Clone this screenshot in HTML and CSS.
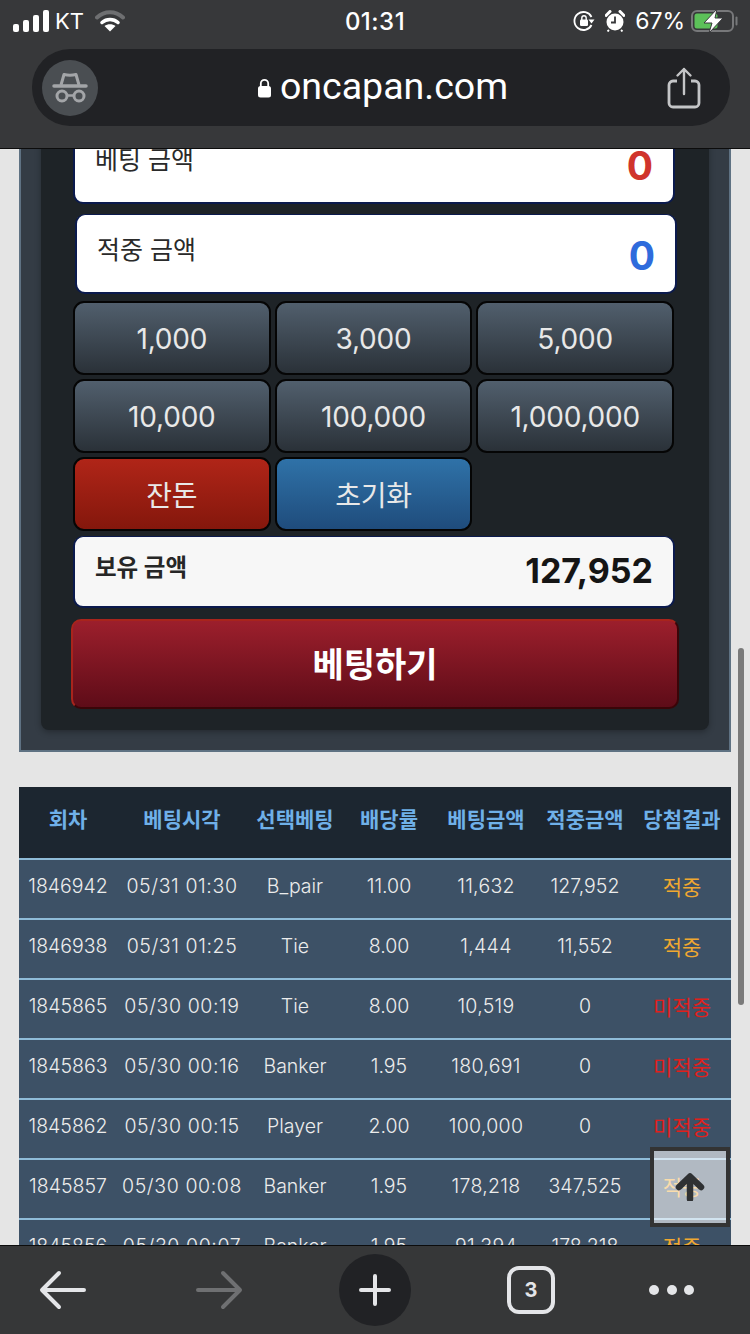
FILE: index.html
```html
<!DOCTYPE html>
<html lang="ko">
<head>
    <meta charset="UTF-8">
    <meta name="viewport" content="width=device-width, initial-scale=1.0">
    <title>oncapan.com</title>
    <link rel="stylesheet" href="styles.css">
</head>
<body>
    <div class="phone">
        <header class="browser-top">
            <div class="status-bar">
                <div class="status-left">
                    <svg class="signal" width="36" height="22" viewBox="0 0 36 22">
                        <rect x="0" y="14" width="6" height="8" rx="2" fill="#fff"/>
                        <rect x="10" y="10" width="6" height="12" rx="2" fill="#fff"/>
                        <rect x="20" y="5" width="6" height="17" rx="2" fill="#fff"/>
                        <rect x="30" y="0" width="6" height="22" rx="2" fill="#fff"/>
                    </svg>
                    <span class="carrier">KT</span>
                    <svg class="wifi" width="30" height="22" viewBox="0 0 30 22">
                        <path d="M2 7.500C9.500 .5 20.500 .5 28 7.500" fill="none" stroke="#6e6f71" stroke-width="4" stroke-linecap="round"/>
                        <path d="M7 12.500C11.500 8.500 18.500 8.500 23 12.500" fill="none" stroke="#fff" stroke-width="3.500" stroke-linecap="round"/>
                        <path d="M15 21.500L9.500 16C12.500 13.500 17.500 13.500 20.500 16Z" fill="#fff"/>
                    </svg>
                </div>
                <div class="status-time">01:31</div>
                <div class="status-right">
                    <svg width="22" height="22" viewBox="0 0 22 22">
                        <path d="M18.500 7A9 9 0 1 0 18.500 15" fill="none" stroke="#fff" stroke-width="1.800"/>
                        <path d="M15.500 9.500H21.500L18.500 13.500Z" fill="#fff"/>
                        <rect x="7" y="9.500" width="8" height="6.500" rx="1.200" fill="#fff"/>
                        <path d="M8.800 10V8a2.200 2.200 0 0 1 4.400 0v2" fill="none" stroke="#fff" stroke-width="1.400"/>
                    </svg>
                    <svg width="20" height="22" viewBox="0 0 20 22">
                        <circle cx="10" cy="12" r="8.500" fill="#fff"/>
                        <path d="M1 5.500L5 1.500M19 5.500L15 1.500" stroke="#fff" stroke-width="3" stroke-linecap="round"/>
                        <path d="M10 6.500V12.500H6" fill="none" stroke="#37383a" stroke-width="1.800"/>
                        <path d="M4 20L2.500 21.500M16 20L17.500 21.500" stroke="#fff" stroke-width="1.800"/>
                    </svg>
                    <span class="battery-text">67%</span>
                    <svg width="48" height="24" viewBox="0 0 48 24">
                        <rect x="1" y="2" width="41" height="20" rx="5" fill="none" stroke="#77787a" stroke-width="2"/>
                        <rect x="3.500" y="4.500" width="23" height="15" rx="2.500" fill="#5cc159"/>
                        <path d="M45.500 8.500V15.500" stroke="#77787a" stroke-width="2" stroke-linecap="round"/>
                        <path d="M26 0L13 14H21L18 24L32 9H24Z" fill="#fff" stroke="#37383a" stroke-width="1"/>
                    </svg>
                </div>
            </div>
            <div class="url-bar">
                <div class="incognito">
                    <svg width="36" height="36" viewBox="0 0 36 36">
                        <path d="M9 15L12 4.500Q18 6 24 4.500L27 15" fill="none" stroke="#a3a5a8" stroke-width="3" stroke-linejoin="round"/>
                        <path d="M2 16H34" stroke="#a3a5a8" stroke-width="3.500" stroke-linecap="round"/>
                        <circle cx="10" cy="26" r="5" fill="none" stroke="#a3a5a8" stroke-width="3"/>
                        <circle cx="27" cy="26" r="5" fill="none" stroke="#a3a5a8" stroke-width="3"/>
                        <path d="M15 25.500H22" stroke="#a3a5a8" stroke-width="2.500"/>
                    </svg>
                </div>
                <div class="url-text">
                    <svg width="15" height="20" viewBox="0 0 15 20">
                        <rect x="1" y="8" width="13" height="11.500" rx="2.500" fill="#fff"/>
                        <path d="M3.800 8.500V5.500a3.700 3.700 0 0 1 7.400 0v3" fill="none" stroke="#fff" stroke-width="1.800"/>
                    </svg>
                    <span class="url-host">oncapan.com</span>
                </div>
                <svg class="share" width="34" height="42" viewBox="0 0 34 42">
                    <path d="M10 14H6a4 4 0 0 0-4 4V36a4 4 0 0 0 4 4H28a4 4 0 0 0 4-4V18a4 4 0 0 0-4-4H24" fill="none" stroke="#c4c5c7" stroke-width="2.800"/>
                    <path d="M17 27V2M10.500 8.500L17 2L23.500 8.500" fill="none" stroke="#c4c5c7" stroke-width="2.400" stroke-linecap="round" stroke-linejoin="round"/>
                </svg>
            </div>
        </header>

        <main class="page">
            <div class="page-inner">
                <section class="bet-panel">
                    <div class="bet-box">
                        <div class="amount-row row-bet">
                            <span class="amount-label">베팅 금액</span>
                            <span class="amount-value red">0</span>
                        </div>
                        <div class="amount-row row-win">
                            <span class="amount-label">적중 금액</span>
                            <span class="amount-value blue">0</span>
                        </div>
                        <div class="chip-grid">
                            <button class="chip">1,000</button>
                            <button class="chip">3,000</button>
                            <button class="chip">5,000</button>
                            <button class="chip">10,000</button>
                            <button class="chip">100,000</button>
                            <button class="chip">1,000,000</button>
                            <button class="chip chip-red">잔돈</button>
                            <button class="chip chip-blue">초기화</button>
                        </div>
                        <div class="balance-row">
                            <span class="balance-label">보유 금액</span>
                            <span class="balance-value">127,952</span>
                        </div>
                        <button class="bet-button">베팅하기</button>
                    </div>
                </section>

                <table class="history">
                    <colgroup>
                        <col class="col-round">
                        <col class="col-time">
                        <col class="col-pick">
                        <col class="col-rate">
                        <col class="col-amount">
                        <col class="col-win">
                        <col class="col-result">
                    </colgroup>
                    <thead>
                        <tr>
                            <th>회차</th>
                            <th>베팅시각</th>
                            <th>선택베팅</th>
                            <th>배당률</th>
                            <th>베팅금액</th>
                            <th>적중금액</th>
                            <th>당첨결과</th>
                        </tr>
                    </thead>
                    <tbody>
                        <tr><td>1846942</td><td class="when">05/31 01:30</td><td>B_pair</td><td>11.00</td><td class="stake">11,632</td><td>127,952</td><td class="hit">적중</td></tr>
                        <tr><td>1846938</td><td class="when">05/31 01:25</td><td>Tie</td><td>8.00</td><td class="stake">1,444</td><td>11,552</td><td class="hit">적중</td></tr>
                        <tr><td>1845865</td><td class="when">05/30 00:19</td><td>Tie</td><td>8.00</td><td class="stake">10,519</td><td>0</td><td class="miss">미적중</td></tr>
                        <tr><td>1845863</td><td class="when">05/30 00:16</td><td>Banker</td><td>1.95</td><td class="stake">180,691</td><td>0</td><td class="miss">미적중</td></tr>
                        <tr><td>1845862</td><td class="when">05/30 00:15</td><td>Player</td><td>2.00</td><td class="stake">100,000</td><td>0</td><td class="miss">미적중</td></tr>
                        <tr><td>1845857</td><td class="when">05/30 00:08</td><td>Banker</td><td>1.95</td><td class="stake">178,218</td><td>347,525</td><td class="hit">적중</td></tr>
                        <tr><td>1845856</td><td class="when">05/30 00:07</td><td>Banker</td><td>1.95</td><td class="stake">91,394</td><td>178,218</td><td class="hit">적중</td></tr>
                    </tbody>
                </table>
            </div>

            <div class="scrollbar"></div>
            <button class="to-top" aria-label="top">
                <svg width="30" height="28" viewBox="0 0 30 28">
                    <path d="M15 26V4M4 14L15 3.500L26 14" fill="none" stroke="#2f3133" stroke-width="6.500" stroke-linecap="round" stroke-linejoin="round"/>
                </svg>
            </button>
        </main>

        <footer class="browser-bottom">
            <svg width="48" height="40" viewBox="0 0 48 40">
                <path d="M45 20H4M20 3L3 20L20 37" fill="none" stroke="#e4e5e8" stroke-width="4" stroke-linecap="round" stroke-linejoin="round"/>
            </svg>
            <svg width="48" height="40" viewBox="0 0 48 40">
                <path d="M3 20H44M28 3L45 20L28 37" fill="none" stroke="#6f7072" stroke-width="4" stroke-linecap="round" stroke-linejoin="round"/>
            </svg>
            <div class="new-tab">
                <svg width="34" height="34" viewBox="0 0 34 34">
                    <path d="M17 3V31M3 17H31" stroke="#e4e5e8" stroke-width="4" stroke-linecap="round"/>
                </svg>
            </div>
            <div class="tab-count">3</div>
            <div class="more-dots"><i></i><i></i><i></i></div>
        </footer>
    </div>
</body>
</html>
```

FILE: styles.css
```css
* {
    margin: 0;
    padding: 0;
    box-sizing: border-box;
}

body {
    font-family: Inter, 'Noto Sans CJK KR', sans-serif;
    background: #e5e5e5;
    overflow: hidden;
}

button {
    font-family: inherit;
}

.phone {
    width: 750px;
    height: 1334px;
    display: flex;
    flex-direction: column;
    overflow: hidden;
}

/* browser chrome, top */
.browser-top {
    height: 149px;
    flex: none;
    background: #37383a;
    border-bottom: 1px solid #0c0c0c;
    color: #fff;
}

.status-bar {
    height: 49px;
    display: grid;
    grid-template-columns: 1fr auto 1fr;
    align-items: center;
    padding: 0 11px 7px 13px;
}

.status-left,
.status-right {
    display: flex;
    align-items: center;
}

.status-right {
    justify-content: flex-end;
    gap: 10px;
}

.carrier {
    font-size: 22px;
    margin: 0 11px 0 6px;
}

.status-time {
    margin-left: -2px;
    font-size: 24px;
    font-weight: 500;
    letter-spacing: 0.5px;
}

.battery-text {
    font-size: 23px;
    margin-right: -4px;
}

.url-bar {
    width: 698px;
    height: 77px;
    margin-left: 32px;
    background: #212225;
    border-radius: 38px;
    display: flex;
    align-items: center;
    padding: 0 29px 0 10px;
}

.incognito {
    width: 56px;
    height: 56px;
    border-radius: 50%;
    background: #4a4e52;
    display: flex;
    align-items: center;
    justify-content: center;
}

.url-text {
    flex: 1;
    display: flex;
    align-items: center;
    justify-content: center;
    gap: 8px;
    font-family: Roboto, sans-serif;
    font-size: 37.500px;
}

.url-host {
    margin-bottom: 3px;
}

/* scrolled page */
.page {
    flex: 1;
    position: relative;
    overflow: hidden;
    background: #e5e5e5;
}

.page-inner {
    margin: -52px 19px 0;
}

.bet-panel {
    background: #343c45;
    border: 2px solid #5f7283;
    padding: 0 20px 20px;
}

.bet-box {
    background: #1e2327;
    border-radius: 0 0 8px 8px;
    box-shadow: 0 2px 6px rgba(0, 0, 0, 0.3);
    padding: 25px 30px 21px;
}

.amount-row {
    width: 602px;
    height: 80px;
    background: #fff;
    border: solid #0b1a4d;
    border-width: 1px 2px 2px;
    border-radius: 10px;
    display: flex;
    justify-content: space-between;
    padding: 0 20px 0 20px;
    color: #2a2a2a;
}

.row-bet {
    margin-left: 2px;
}

.row-win {
    margin: 10px 0 0 4px;
}

.amount-label {
    font-size: 25px;
    line-height: 70px;
}

.amount-value {
    font-size: 39px;
    font-weight: 700;
    line-height: 82px;
}

.red {
    color: #d0342c;
}

.blue {
    color: #2f6bdc;
}

.chip-grid {
    width: 601px;
    margin: 7px 0 0 2px;
    display: grid;
    grid-template-columns: repeat(3, 1fr);
    grid-auto-rows: 74px;
    gap: 4px;
}

.chip {
    border: 2px solid #050505;
    border-radius: 11px;
    padding-top: 2px;
    background: linear-gradient(#515f6d, #2a3138);
    color: #e8e8e8;
    font-size: 28px;
    letter-spacing: -0.2px;
}

.chip-red {
    padding: 0;
    background: linear-gradient(#b02518, #84170c);
}

.chip-blue {
    padding: 0;
    background: linear-gradient(#2f72a8, #1f4c7c);
}

.balance-row {
    width: 602px;
    height: 72px;
    margin: 5px 0 0 2px;
    background: #f7f7f7;
    border: solid #0b1a4d;
    border-width: 1px 2px 2px;
    border-radius: 10px;
    display: flex;
    justify-content: space-between;
    padding: 0 20px;
    color: #151515;
}

.balance-label {
    font-size: 23.500px;
    font-weight: 700;
    line-height: 62px;
    color: #262626;
}

.balance-value {
    font-size: 34px;
    font-weight: 700;
    line-height: 68px;
}

.bet-button {
    display: block;
    width: 608px;
    height: 90px;
    margin-top: 11px;
    padding-bottom: 4px;
    border: 2px solid #3a0508;
    border-top-color: #a8241c;
    border-left-color: #a8241c;
    border-radius: 10px;
    background: linear-gradient(#9c1f2c, #5e0c18);
    color: #fff;
    font-size: 34px;
    font-weight: 700;
}

/* history table */
.history {
    width: 712px;
    margin-top: 35px;
    border-collapse: separate;
    border-spacing: 0;
    table-layout: fixed;
    background: #3d5166;
}

.col-round { width: 98px; }
.col-time { width: 130px; }
.col-pick { width: 96px; }
.col-rate { width: 92px; }
.col-amount { width: 102px; }
.col-win { width: 96px; }
.col-result { width: 98px; }

.history th {
    height: 71px;
    padding-bottom: 9px;
    background: #1c2630;
    color: #6fb0e8;
    font-size: 21px;
    font-weight: 700;
    white-space: nowrap;
}

.history td {
    height: 60px;
    padding-bottom: 6px;
    border-top: 2px solid #8fbcd9;
    color: #ececec;
    font-size: 19.500px;
    font-weight: 300;
    text-align: center;
    white-space: nowrap;
}

.history td.when {
    letter-spacing: 0.6px;
}

.history td.stake {
    letter-spacing: 0.3px;
}

.history td.hit {
    color: #f0a830;
    font-size: 21px;
    font-weight: 400;
}

.history td.miss {
    color: #e0201c;
    font-size: 21px;
    font-weight: 400;
}

.scrollbar {
    position: absolute;
    left: 738px;
    top: 499px;
    width: 6px;
    height: 357px;
    border-radius: 3px;
    background: #7a7a7a;
}

.to-top {
    position: absolute;
    left: 650px;
    top: 998px;
    width: 80px;
    height: 80px;
    border: 4px solid #333;
    background: rgba(255, 255, 255, 0.6);
    display: flex;
    align-items: center;
    justify-content: center;
}

/* browser chrome, bottom */
.browser-bottom {
    height: 89px;
    flex: none;
    background: #363738;
    border-top: 1px solid #0c0c0c;
    display: grid;
    grid-template-columns: 125px 188px 124px 188px 1fr;
    align-items: center;
    justify-items: center;
}

.new-tab {
    width: 72px;
    height: 72px;
    border-radius: 50%;
    background: #212225;
    display: flex;
    align-items: center;
    justify-content: center;
}

.tab-count {
    width: 48px;
    height: 48px;
    border: 4px solid #e4e5e8;
    border-radius: 12px;
    color: #e4e5e8;
    font-size: 20px;
    font-weight: 700;
    text-align: center;
    line-height: 40px;
}

.more-dots {
    display: flex;
    gap: 7.500px;
    margin-right: 32px;
}

.more-dots i {
    width: 10px;
    height: 10px;
    border-radius: 50%;
    background: #e4e5e8;
}
```
